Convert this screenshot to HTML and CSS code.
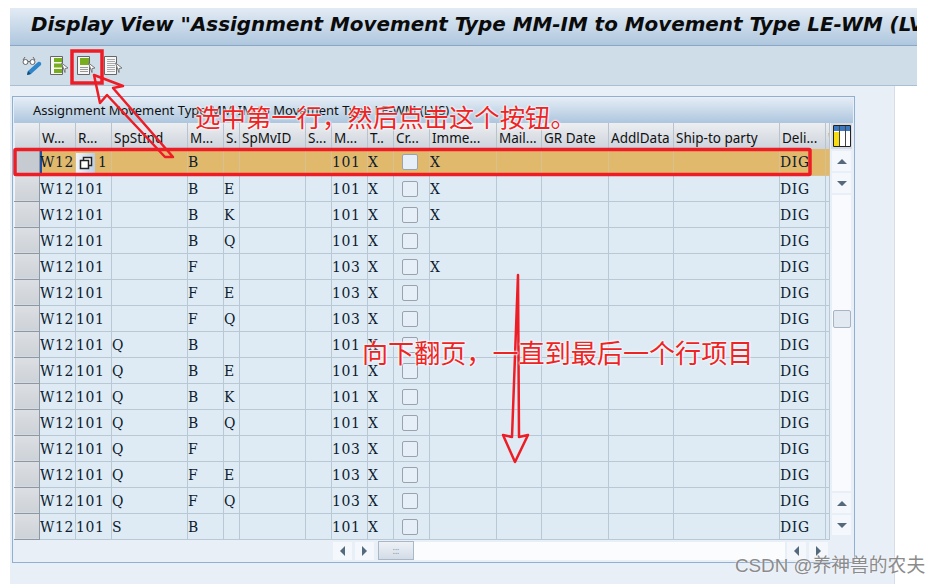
FILE: index.html
```html
<!DOCTYPE html>
<html lang="en">
<head>
    <meta charset="UTF-8">
    <meta name="viewport" content="width=device-width, initial-scale=1.0">
    <title>Display View</title>
    <link rel="stylesheet" href="styles.css">
</head>
<body>
<div class="window">
    <div class="title-bar"><h1>Display View "Assignment Movement Type MM-IM to Movement Type LE-WM (LVS)"</h1></div>
    <div class="toolbar">
        <svg class="tool tool-first" width="21" height="20" viewBox="0 0 21 20"><circle cx="3.500" cy="6" r="2.500" fill="#fff" stroke="#666"/><circle cx="10.500" cy="6" r="2.500" fill="#fff" stroke="#666"/><path d="M1 4l2-3M13 4l-2-3M6 5.500h2" fill="none" stroke="#666"/><path d="M5 19l1-4 10-9c2-1 4 1 3 3L9 18z" fill="#2f86c8"/><path d="M5 19l1-4 3 3z" fill="#174a72"/></svg>
        <svg class="tool" width="20" height="20" viewBox="0 0 20 20"><path d="M.5.500h12v18H.5z" fill="#f7f7f7" stroke="#666"/><path d="M4 2h8v4H4zM4 7.500h8v4H4zM4 13h8v4H4z" fill="#78ad1e"/><path d="M11.500 7l6.500 5-3 .5 0 4z" fill="#fff" stroke="#777"/></svg>
        <svg class="tool" width="20" height="20" viewBox="0 0 20 20"><path d="M.5.500h12v18H.5z" fill="#f7f7f7" stroke="#666"/><path d="M3 2h9v7H3z" fill="#78ad1e"/><path d="M3 11.500h8M3 13.500h8M3 15.500h8" stroke="#999"/><path d="M11.500 7l6.500 5-3 .5 0 4z" fill="#fff" stroke="#777"/></svg>
        <svg class="tool" width="20" height="20" viewBox="0 0 20 20"><path d="M.5.500h12v18H.5z" fill="#f7f7f7" stroke="#666"/><path d="M3 3.500h8M3 5.500h8M3 7.500h8M3 9.500h8M3 11.500h8M3 13.500h8M3 15.500h8" stroke="#aaa"/><path d="M11.500 7l6.500 5-3 .5 0 4z" fill="#fff" stroke="#777"/></svg>
    </div>
    <div class="content">
        <div class="panel">
            <div class="panel-title">Assignment Movement Type MM-IM to Movement Type LE-WM (LVS)</div>
            <div class="grid-wrap">
                <table class="grid">
                    <colgroup>
                        <col class="c25"><col class="c36"><col class="c36"><col class="c76"><col class="c36"><col class="c16"><col class="c66"><col class="c26"><col class="c36"><col class="c26"><col class="c36"><col class="c67"><col class="c45"><col class="c67"><col class="c65"><col class="c106"><col class="c46"><col class="c4">
                    </colgroup>
                    <thead>
                        <tr><th></th><th>W...</th><th>R...</th><th>SpStInd</th><th>M...</th><th>S.</th><th>SpMvID</th><th>S...</th><th>M...</th><th>T..</th><th>Cr...</th><th>Imme...</th><th>Mail...</th><th>GR Date</th><th>AddlData</th><th>Ship-to party</th><th>Deli...</th><th>'</th></tr>
                    </thead>
                    <tbody>
                        <tr class="selected"><td class="sel"></td><td class="cursor">W12</td><td class="copy-cell"><span class="copy-btn"><svg width="14" height="14" viewBox="0 0 14 14"><path d="M4.500 1.500h8v8h-8z" fill="#fff" stroke="#222" stroke-width="1.500"/><path d="M1.500 4.500h8v8h-8z" fill="#fff" stroke="#222" stroke-width="1.500"/></svg></span>1</td><td></td><td>B</td><td></td><td></td><td></td><td>101</td><td>X</td><td><span class="check"></span></td><td>X</td><td></td><td></td><td></td><td></td><td>DIG</td><td></td></tr>
                        <tr><td class="sel"></td><td>W12</td><td>101</td><td></td><td>B</td><td>E</td><td></td><td></td><td>101</td><td>X</td><td><span class="check"></span></td><td>X</td><td></td><td></td><td></td><td></td><td>DIG</td><td></td></tr>
                        <tr><td class="sel"></td><td>W12</td><td>101</td><td></td><td>B</td><td>K</td><td></td><td></td><td>101</td><td>X</td><td><span class="check"></span></td><td>X</td><td></td><td></td><td></td><td></td><td>DIG</td><td></td></tr>
                        <tr><td class="sel"></td><td>W12</td><td>101</td><td></td><td>B</td><td>Q</td><td></td><td></td><td>101</td><td>X</td><td><span class="check"></span></td><td></td><td></td><td></td><td></td><td></td><td>DIG</td><td></td></tr>
                        <tr><td class="sel"></td><td>W12</td><td>101</td><td></td><td>F</td><td></td><td></td><td></td><td>103</td><td>X</td><td><span class="check"></span></td><td>X</td><td></td><td></td><td></td><td></td><td>DIG</td><td></td></tr>
                        <tr><td class="sel"></td><td>W12</td><td>101</td><td></td><td>F</td><td>E</td><td></td><td></td><td>103</td><td>X</td><td><span class="check"></span></td><td></td><td></td><td></td><td></td><td></td><td>DIG</td><td></td></tr>
                        <tr><td class="sel"></td><td>W12</td><td>101</td><td></td><td>F</td><td>Q</td><td></td><td></td><td>103</td><td>X</td><td><span class="check"></span></td><td></td><td></td><td></td><td></td><td></td><td>DIG</td><td></td></tr>
                        <tr><td class="sel"></td><td>W12</td><td>101</td><td>Q</td><td>B</td><td></td><td></td><td></td><td>101</td><td>X</td><td><span class="check"></span></td><td></td><td></td><td></td><td></td><td></td><td>DIG</td><td></td></tr>
                        <tr><td class="sel"></td><td>W12</td><td>101</td><td>Q</td><td>B</td><td>E</td><td></td><td></td><td>101</td><td>X</td><td><span class="check"></span></td><td></td><td></td><td></td><td></td><td></td><td>DIG</td><td></td></tr>
                        <tr><td class="sel"></td><td>W12</td><td>101</td><td>Q</td><td>B</td><td>K</td><td></td><td></td><td>101</td><td>X</td><td><span class="check"></span></td><td></td><td></td><td></td><td></td><td></td><td>DIG</td><td></td></tr>
                        <tr><td class="sel"></td><td>W12</td><td>101</td><td>Q</td><td>B</td><td>Q</td><td></td><td></td><td>101</td><td>X</td><td><span class="check"></span></td><td></td><td></td><td></td><td></td><td></td><td>DIG</td><td></td></tr>
                        <tr><td class="sel"></td><td>W12</td><td>101</td><td>Q</td><td>F</td><td></td><td></td><td></td><td>103</td><td>X</td><td><span class="check"></span></td><td></td><td></td><td></td><td></td><td></td><td>DIG</td><td></td></tr>
                        <tr><td class="sel"></td><td>W12</td><td>101</td><td>Q</td><td>F</td><td>E</td><td></td><td></td><td>103</td><td>X</td><td><span class="check"></span></td><td></td><td></td><td></td><td></td><td></td><td>DIG</td><td></td></tr>
                        <tr><td class="sel"></td><td>W12</td><td>101</td><td>Q</td><td>F</td><td>Q</td><td></td><td></td><td>103</td><td>X</td><td><span class="check"></span></td><td></td><td></td><td></td><td></td><td></td><td>DIG</td><td></td></tr>
                        <tr><td class="sel"></td><td>W12</td><td>101</td><td>S</td><td>B</td><td></td><td></td><td></td><td>101</td><td>X</td><td><span class="check"></span></td><td></td><td></td><td></td><td></td><td></td><td>DIG</td><td></td></tr>
                    </tbody>
                </table>
                <div class="vscroll">
                    <div class="config"><svg width="18" height="22" viewBox="0 0 18 22"><path d="M.5.500h17v21H.5z" fill="#fff" stroke="#222"/><path d="M1 1h16v5H1z" fill="#3c78c0"/><path d="M1 7h5v14H1z" fill="#f6dc10"/><path d="M6.500 1v20M12.500 1v20" stroke="#444"/></svg></div>
                    <button class="sbtn"><span class="up"></span></button>
                    <button class="sbtn"><span class="down"></span></button>
                    <div class="vtrack"><div class="vthumb"></div></div>
                    <button class="sbtn"><span class="up"></span></button>
                    <button class="sbtn"><span class="down"></span></button>
                </div>
            </div>
            <div class="hscroll">
                <button class="sbtn-h"><span class="left"></span></button>
                <button class="sbtn-h"><span class="right"></span></button>
                <div class="hthumb">:::</div>
                <div class="htrack"></div>
                <button class="sbtn-h"><span class="left"></span></button>
                <button class="sbtn-h"><span class="right"></span></button>
            </div>
        </div>
    </div>
</div>

<!-- red annotations drawn on top of the screenshot -->
<svg class="marks" width="941" height="585" viewBox="0 0 941 585">
    <rect x="72" y="51" width="30" height="32" fill="none" stroke="#ee1c25" stroke-width="3.500"/>
    <rect x="15" y="149.500" width="795" height="25" rx="1" fill="none" stroke="#ee1c25" stroke-width="3.500"/>
    <path d="M94 75l6 28 7-8 58 62h8l-60-69 10-2z" fill="none" stroke="#ee1c25" stroke-width="2.500" stroke-linejoin="round"/>
    <path d="M518 275l-6 162-9-2 12 27 13-27-9 2z" fill="none" stroke="#ee1c25" stroke-width="2.500" stroke-linejoin="round"/>
</svg>
<div class="note note-top">选中第一行，然后点击这个按钮。</div>
<div class="note note-mid">向下翻页，一直到最后一个行项目</div>
<div class="watermark">CSDN @养神兽的农夫</div>
</body>
</html>
```

FILE: styles.css
```css
html, body {
    margin: 0;
    padding: 0;
    background: #fff;
}
body {
    width: 941px;
    height: 585px;
    overflow: hidden;
    position: relative;
    font-family: "Noto Sans", "Noto Sans CJK SC", sans-serif;
}
.window {
    padding: 8px 0 0 10px;
    width: 907px;
}
.title-bar {
    height: 37px;
    overflow: hidden;
    background: linear-gradient(#e2ebf4, #afc7de);
    border-bottom: 1px solid #8aa8c6;
}
.title-bar h1 {
    margin: 0;
    padding: 1px 0 0 21px;
    font: italic bold 19.900px/32px "DejaVu Sans", sans-serif;
    color: #0b0b0b;
    white-space: nowrap;
}
.toolbar {
    height: 39px;
    display: flex;
    align-items: center;
    gap: 7px;
    background: #cfdde9;
    border-bottom: 1px solid #a9bfd4;
}
.tool-first {
    margin-left: 12px;
}
.content {
    width: 885px;
    height: 498px;
    padding: 10px 0 0 2px;
    background: #e9eff7;
    border-right: 1px solid #d5dde9;
    box-sizing: border-box;
}
.panel {
    width: 843px;
    height: 467px;
    box-sizing: border-box;
    border: 1px solid #8fb0d3;
    padding: 1px;
    background: #e9eff7;
}
.panel-title {
    height: 25px;
    line-height: 24px;
    padding-left: 19px;
    font-size: 13px;
    color: #111;
    background: linear-gradient(#e4ecf5, #adc6de);
}
.grid-wrap {
    display: flex;
}
.grid {
    width: 815px;
    table-layout: fixed;
    border-collapse: collapse;
    border-spacing: 0;
    flex: none;
}
.c25 { width: 25px; }
.c36 { width: 36px; }
.c76 { width: 76px; }
.c16 { width: 16px; }
.c66 { width: 66px; }
.c26 { width: 26px; }
.c67 { width: 67px; }
.c45 { width: 45px; }
.c65 { width: 65px; }
.c106 { width: 106px; }
.c46 { width: 46px; }
.c4 { width: 4px; }
.grid th {
    height: 26px;
    padding: 3px 0 0 2px;
    box-sizing: border-box;
    text-align: left;
    font-size: 13.500px;
    font-weight: normal;
    color: #111;
    white-space: nowrap;
    overflow: hidden;
    background: linear-gradient(#eceef1, #ccd3db);
    border-right: 1px solid #b9c3ce;
}
.grid td {
    height: 26px;
    padding: 1px 0 0;
    box-sizing: border-box;
    font: 15.500px/24px "DejaVu Serif Condensed", "DejaVu Serif", serif;
    letter-spacing: 0.6px;
    color: #0d1b2e;
    white-space: nowrap;
    overflow: hidden;
    background: #deebf5;
    border-right: 1px solid #b8c8d4;
    border-bottom: 1px solid #b8c8d4;
}
.grid td.sel {
    padding: 0;
    background: linear-gradient(#dcdfe3, #cdd2d8);
    border: 1px solid #f1f3f6;
    border-right: 1px solid #8c98a4;
    border-bottom: 1px solid #8c98a4;
}
.grid tr.selected td {
    background: #e0b96d;
    border-color: #d8c090;
}
.grid tr.selected td.sel {
    background: #c6cbd1;
    border-color: #8c98a4;
}
.grid td.cursor {
    box-shadow: inset 2px 0 0 #1f4fa0;
}
.copy-btn {
    display: inline-flex;
    width: 19px;
    height: 20px;
    align-items: center;
    justify-content: center;
    vertical-align: middle;
    margin-right: 3px;
    background: linear-gradient(90deg, #f2f5f9, #bccde3);
}
.check {
    display: block;
    width: 14px;
    height: 14px;
    margin: 0 0 0 8px;
    border: 1px solid #9aa3ad;
    border-radius: 2px;
    background: #e6eff7;
}
.vscroll {
    width: 22px;
    margin-left: 0;
    flex: none;
    display: flex;
    flex-direction: column;
    align-items: flex-end;
    gap: 2px;
}
.config {
    height: 26px;
    width: 21px;
    display: flex;
    align-items: center;
    justify-content: center;
    background: #d5dbe2;
}
.sbtn {
    width: 19px;
    height: 20px;
    padding: 0;
    border: 0;
    background: #f4f7fb;
    display: flex;
    align-items: center;
    justify-content: center;
    margin-right: 1px;
}
.up, .down, .left, .right {
    display: block;
    width: 0;
    height: 0;
    border-style: solid;
    border-color: transparent;
}
.up {
    border-width: 0 5px 5px;
    border-bottom-color: #55697c;
}
.down {
    border-width: 5px 5px 0;
    border-top-color: #55697c;
}
.left {
    border-width: 5px 5px 5px 0;
    border-right-color: #55697c;
}
.right {
    border-width: 5px 0 5px 5px;
    border-left-color: #55697c;
}
.vtrack {
    width: 19px;
    height: 296px;
    margin-right: 1px;
    background: #f8fafd;
    padding-top: 115px;
    box-sizing: border-box;
}
.vthumb {
    height: 18px;
    margin: 0 0 0 1px;
    border: 1px solid #a6b4c3;
    border-radius: 2px;
    background: #e3e9f0;
    box-sizing: border-box;
}
.hscroll {
    display: flex;
    align-items: center;
    height: 20px;
    margin-top: 1px;
    padding-left: 319px;
    gap: 3px;
}
.sbtn-h {
    width: 19px;
    height: 18px;
    padding: 0;
    border: 0;
    background: #f4f7fb;
    display: flex;
    align-items: center;
    justify-content: center;
}
.hthumb {
    width: 36px;
    height: 19px;
    margin-left: 1px;
    line-height: 17px;
    box-sizing: border-box;
    border: 1px solid #a9b8c8;
    background: linear-gradient(#eef2f7, #d3dce6);
    font-size: 8px;
    color: #77848f;
    text-align: center;
}
.htrack {
    width: 371px;
    height: 18px;
    margin: 0 -1px 0 -3px;
    background: #fbfcfd;
}
.marks {
    position: absolute;
    left: 0;
    top: 0;
}
.note {
    position: absolute;
    font-family: "Noto Sans CJK SC", sans-serif;
    color: #ee2424;
    white-space: nowrap;
    text-shadow: 0 0 2px #fff, 0 0 2px #fff, 0 0 3px #fff;
}
.note-top {
    left: 195px;
    top: 98px;
    font-size: 25.400px;
    line-height: 36px;
}
.note-mid {
    left: 362px;
    top: 334px;
    font-size: 26.100px;
    line-height: 36px;
}
.watermark {
    position: absolute;
    left: 735px;
    top: 553px;
    font-family: "Liberation Sans", "Noto Sans CJK SC", sans-serif;
    font-size: 18.800px;
    line-height: 26px;
    color: #8b8b8b;
    text-shadow: 0 0 2px #fff;
    white-space: nowrap;
}
```
